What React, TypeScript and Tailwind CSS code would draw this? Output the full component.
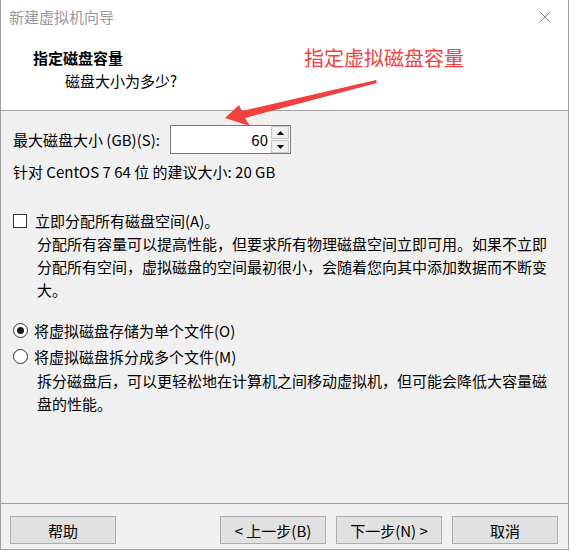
const font = { fontFamily: '"Noto Sans CJK SC", "Noto Sans", sans-serif' };

function Btn({ label }: { label: string }) {
  return (
    <button className="w-[106px] h-[28px] bg-[#e1e1e1] border border-[#adadad] text-[15px] leading-none text-black flex items-center justify-center">
      {label}
    </button>
  );
}

function Spinner() {
  return (
    <div className="flex flex-col w-[18px] h-[27px] mr-[1px] gap-[1px]">
      <div className="flex-1 bg-[#f0f0f0] border border-[#c8c8c8] flex items-center justify-center">
        <svg width="7" height="4" viewBox="0 0 7 4">
          <polygon points="3.5,0 7,4 0,4" fill="#000" />
        </svg>
      </div>
      <div className="flex-1 bg-[#f0f0f0] border border-[#c8c8c8] flex items-center justify-center">
        <svg width="7" height="4" viewBox="0 0 7 4">
          <polygon points="0,0 7,0 3.5,4" fill="#000" />
        </svg>
      </div>
    </div>
  );
}

export default function App() {
  return (
    <div className="relative w-[570px] h-[551px] bg-white text-black" style={font}>
      <div className="w-[569px] h-[550px] border-l border-r border-b border-[#a0a0a0] bg-[#f0f0f0] flex flex-col">
        {/* title bar */}
        <div className="h-[33px] bg-white flex items-center justify-between pl-[8px] pr-[17px]">
          <span className="text-[15px] leading-none text-[#999999]">新建虚拟机向导</span>
          <svg width="12" height="12" viewBox="0 0 12 12">
            <path d="M0.5 0.5 L11.5 11.5 M11.5 0.5 L0.5 11.5" stroke="#8a8a8a" strokeWidth="1" />
          </svg>
        </div>

        {/* header */}
        <div className="h-[78px] bg-white border-b border-[#a0a0a0] pl-[32px] pt-[13px]">
          <div className="text-[15px] leading-[23px] font-bold">指定磁盘容量</div>
          <div className="text-[15px] leading-[23px] pl-[32px]">磁盘大小为多少?</div>
        </div>

        {/* body */}
        <div className="flex-1 flex flex-col pl-[12px] text-[15px]">
          <div className="flex items-center mt-[14px]">
            <span className="w-[157px] leading-[23px]">最大磁盘大小 (GB)(S):</span>
            <div className="w-[121px] h-[29px] bg-white border border-[#7a7a7a] flex items-center">
              <span className="flex-1 text-right pr-[3px] leading-none">60</span>
              <Spinner />
            </div>
          </div>
          <div className="leading-[23px] mt-[6px]">针对 CentOS 7 64 位 的建议大小: 20 GB</div>

          <div className="flex items-center mt-[26px] leading-[23px]">
            <span className="w-[14px] h-[14px] border border-[#333333] bg-white mr-[8px]" />
            <span>立即分配所有磁盘空间(A)。</span>
          </div>
          <p className="pl-[24px] pr-[14px] leading-[23px]">
            分配所有容量可以提高性能，但要求所有物理磁盘空间立即可用。如果不立即分配所有空间，虚拟磁盘的空间最初很小，会随着您向其中添加数据而不断变大。
          </p>

          <div className="flex items-center mt-[18px] leading-[23px]">
            <span className="w-[15px] h-[15px] rounded-full border border-[#333333] bg-white mr-[6px] flex items-center justify-center">
              <span className="w-[7px] h-[7px] rounded-full bg-[#1a1a1a]" />
            </span>
            <span>将虚拟磁盘存储为单个文件(O)</span>
          </div>
          <div className="flex items-center mt-[3px] leading-[23px]">
            <span className="w-[15px] h-[15px] rounded-full border border-[#333333] bg-white mr-[6px]" />
            <span>将虚拟磁盘拆分成多个文件(M)</span>
          </div>
          <p className="pl-[24px] pr-[14px] mt-[1px] leading-[23px]">
            拆分磁盘后，可以更轻松地在计算机之间移动虚拟机，但可能会降低大容量磁盘的性能。
          </p>
        </div>

        {/* footer */}
        <div className="h-[46px] border-t border-[#a0a0a0] flex items-start pt-[12px] pl-[9px] pr-[10px]">
          <Btn label="帮助" />
          <div className="flex-1" />
          <div className="flex gap-[10px]">
            <Btn label="< 上一步(B)" />
            <Btn label="下一步(N) >" />
            <Btn label="取消" />
          </div>
        </div>
      </div>

      {/* red annotation */}
      <div className="absolute left-[304px] top-[45px] text-[20px] leading-[26px] text-[#f43f3f]">
        指定虚拟磁盘容量
      </div>
      <svg className="absolute left-0 top-0 pointer-events-none" width="570" height="551">
        <polygon
          points="225,118 239,105 242,111 376,80 377,83 245,118 250,126"
          fill="#f43f3f"
        />
      </svg>
    </div>
  );
}
